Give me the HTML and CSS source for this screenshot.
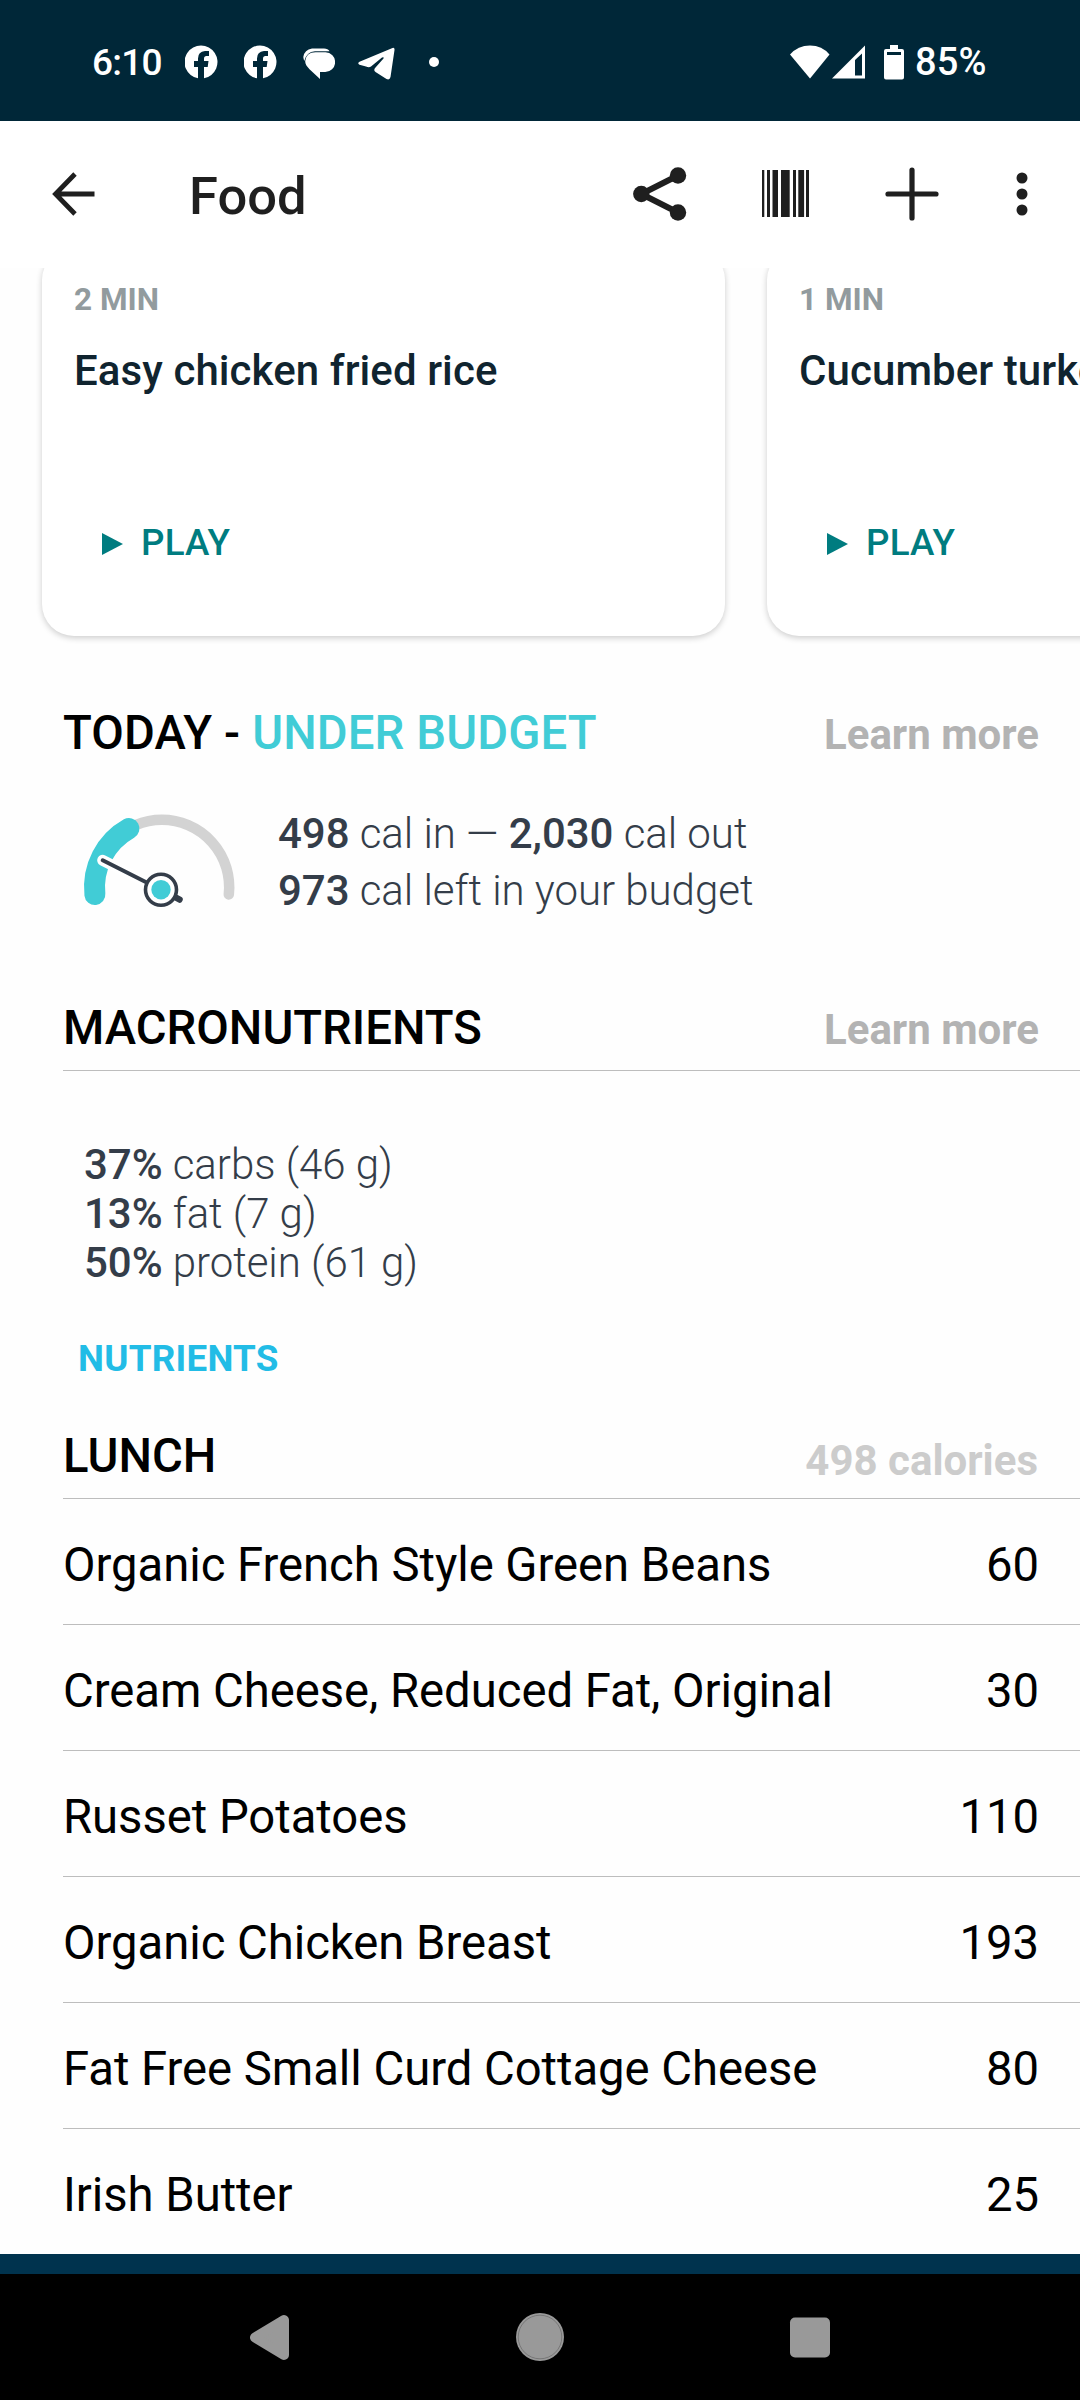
FILE: index.html
```html
<!DOCTYPE html>
<html lang="en">
<head>
    <meta charset="UTF-8">
    <title>Food</title>
    <link rel="stylesheet" href="styles.css">
</head>
<body>
    <!-- Status Bar -->
    <div class="status-bar">
        <div class="status-left">
            <span class="time">6:10</span>
            <svg class="fb-icon" width="34" height="34" viewBox="0 0 34 34"><path fill="#fff" d="M13 33.300V22H9v-6h4v-2.500q0-7 7-7.500h4v5h-2.500Q19 11 19 13.800V16h4.500l-.800 6H19v11.300A16.500 16.500 0 1 0 13 33.300z"/></svg>
            <svg class="fb-icon" width="34" height="34" viewBox="0 0 34 34"><path fill="#fff" d="M13 33.300V22H9v-6h4v-2.500q0-7 7-7.500h4v5h-2.500Q19 11 19 13.800V16h4.500l-.800 6H19v11.300A16.500 16.500 0 1 0 13 33.300z"/></svg>
            <svg class="chat-icon" width="32" height="32" viewBox="0 0 32 32"><path fill="#fff" d="M9 .500h12q4 0 5.500 2.800L12 3.300Q3.500 4 1.300 13 .500 11 .300 9 1.500 1.500 9 .500z"/><path fill="#fff" d="M12.500 4.300h10A9.700 9.700 0 0 1 22 24h-5v7L6.500 21.200Q2 17 2.200 13 3 4.500 12.500 4.300z"/></svg>
            <svg class="telegram-icon" width="38" height="34" viewBox="0 0 38 34"><path fill="#fff" d="M34.500 1Q36.800 .300 36.500 3l-4 27q-.800 3.500-4 2l-11-7q-2.500-2 0-4.500l8-9q.700-2-1.500-1L13 19.500Q11 20.800 8 19.500l-6.500-1.800q-2.500-1.500 0-3z"/></svg>
            <span class="more-dot"></span>
        </div>
        <div class="status-right">
            <svg width="40" height="34" viewBox="0 0 40 34"><path fill="#fff" d="M0 9.500Q8 .500 20 .500t19.500 9L20 33.500z"/></svg>
            <svg class="signal-icon" width="34" height="34" viewBox="0 0 34 34"><path fill="#fff" fill-rule="evenodd" d="M0 33.500 33 .500v33zM23 15v15.500h7V8.500z"/></svg>
            <svg class="battery-icon" width="20" height="35" viewBox="0 0 20 35"><path fill="#fff" fill-rule="evenodd" d="M6 0h8v4h4q2 0 2 2v26.500q0 2-2 2H2q-2 0-2-2V6q0-2 2-2h4zM3 7v3h14V7z"/></svg>
            <span class="percent">85%</span>
        </div>
    </div>

    <!-- Toolbar -->
    <div class="toolbar">
        <svg class="back-icon" width="44" height="44" viewBox="0 0 44 44"><path fill="none" stroke="#1f1f1f" stroke-width="4.800" d="M42.500 22H4M23 2 3.500 22 23 42"/></svg>
        <div class="title">Food</div>
        <svg class="share-icon" width="54" height="54" viewBox="0 0 54 54"><path fill="none" stroke="#1f1f1f" stroke-width="6" d="M45 8.500 8.300 27 45 45.500"/><g fill="#1f1f1f"><circle cx="45" cy="8.500" r="8.200"/><circle cx="8.300" cy="27" r="8.200"/><circle cx="45" cy="45.500" r="8.200"/></g></svg>
        <svg class="barcode-icon" width="47" height="47" viewBox="0 0 47 47"><path fill="#1f1f1f" d="M0 0h2.300v47H0zM5 0h3v47H5zM10.500 0H16v47h-5.500zM19 0h8.700v47H19zM31 0h3v47h-3zM36.300 0h5.800v47h-5.800zM44 0h3v47h-3z"/></svg>
        <svg class="plus-icon" width="54" height="54" viewBox="0 0 54 54"><path stroke="#1f1f1f" stroke-width="5.200" stroke-linecap="round" d="M27 3v48M3 27h48"/></svg>
        <svg class="menu-icon" width="12" height="44" viewBox="0 0 12 44"><g fill="#1f1f1f"><circle cx="6" cy="6" r="5.500"/><circle cx="6" cy="22" r="5.500"/><circle cx="6" cy="38" r="5.500"/></g></svg>
    </div>

    <!-- Main Content Area -->
    <div class="main-content">
        <div class="cards">
            <div class="card">
                <div class="duration">2 MIN</div>
                <div class="card-title">Easy chicken fried rice</div>
                <div class="play"><span class="play-icon"></span>PLAY</div>
            </div>
            <div class="card">
                <div class="duration">1 MIN</div>
                <div class="card-title">Cucumber turkey</div>
                <div class="play"><span class="play-icon"></span>PLAY</div>
            </div>
        </div>

        <!-- Calorie budget -->
        <div class="section-header today-header">
            <div>TODAY - <span class="under">UNDER BUDGET</span></div>
            <div class="learn-more">Learn more</div>
        </div>
        <div class="budget">
            <svg class="gauge" width="160" height="114" viewBox="80 805 160 114" fill="none" stroke-linecap="round">
                <path stroke="#d3d3d3" stroke-width="10.500" d="M95 894.500A67.300 67.300 0 1 1 228.800 894.500"/>
                <path stroke="#41ccd6" stroke-width="21" d="M94.900 894.500A67.300 67.300 0 0 1 129 828.500"/>
                <path stroke="#fff" stroke-width="11" d="M102.700 860.300 161 889.700"/>
                <path stroke="#343d49" stroke-width="4" d="M102.700 860.300 161 889.700"/>
                <path stroke="#343d49" stroke-width="6.500" d="M172 895.500l7.500 4"/>
                <circle cx="161" cy="889.700" r="15.500" fill="#fff" stroke="#343d49" stroke-width="3.600"/>
                <circle cx="161" cy="889.700" r="9.700" fill="#41ccd6"/>
            </svg>
            <div class="budget-text">
                <div><b>498</b> cal in — <b>2,030</b> cal out</div>
                <div><b>973</b> cal left in your budget</div>
            </div>
        </div>

        <!-- Macronutrients -->
        <div class="section-header lined macro-header">
            <div>MACRONUTRIENTS</div>
            <div class="learn-more">Learn more</div>
        </div>
        <div class="macros">
            <div><b>37%</b> carbs (46 g)</div>
            <div><b>13%</b> fat (7 g)</div>
            <div><b>50%</b> protein (61 g)</div>
        </div>
        <div class="nutrients">NUTRIENTS</div>

        <!-- Lunch -->
        <div class="section-header lined lunch-header">
            <div>LUNCH</div>
            <div class="meal-total">498 calories</div>
        </div>
        <div class="food-list">
            <div class="food"><span>Organic French Style Green Beans</span><span>60</span></div>
            <div class="food"><span>Cream Cheese, Reduced Fat, Original</span><span>30</span></div>
            <div class="food"><span>Russet Potatoes</span><span>110</span></div>
            <div class="food"><span>Organic Chicken Breast</span><span>193</span></div>
            <div class="food"><span>Fat Free Small Curd Cottage Cheese</span><span>80</span></div>
            <div class="food"><span>Irish Butter</span><span>25</span></div>
        </div>
    </div>

    <div class="bottom-strip"></div>

    <!-- Android Navigation -->
    <div class="nav-bar">
        <svg width="48" height="48" viewBox="0 0 48 48"><path fill="#999" stroke="#999" stroke-width="10" stroke-linejoin="round" d="M38 7v35L9 24.500z"/></svg>
        <svg width="48" height="48" viewBox="0 0 48 48"><circle cx="24" cy="24" r="24" fill="#999"/><circle cx="24" cy="24" r="21.800" fill="none" stroke="#6f6f6f" stroke-width=".8"/></svg>
        <svg width="48" height="48" viewBox="0 0 48 48"><rect x="4" y="4.500" width="40" height="40" rx="5" fill="#999"/></svg>
    </div>
</body>
</html>
```

FILE: styles.css
```css
:root {
    --status-bg: #002738;
    --strip-bg: #00334e;
    --page-bg: #fefefe;
    --icon-color: #1f1f1f;
    --line-color: #bdbdbd;
    --slate: #343d49;
    --teal: #007c80;
    --aqua: #41ccd6;
}
body {
    font-family: Roboto, sans-serif;
    margin: 0;
    width: 1080px;
    height: 2400px;
    background-color: var(--page-bg);
    color: #000;
    display: flex;
    flex-direction: column;
    overflow: hidden;
}
svg {
    display: block;
    flex-shrink: 0;
}
b {
    font-weight: 500;
}

/* --- Status Bar --- */
.status-bar {
    background-color: var(--status-bg);
    color: #fff;
    height: 121px;
    box-sizing: border-box;
    padding: 3px 92px 0 92px;
    display: flex;
    align-items: center;
    justify-content: space-between;
    font-size: 37px;
    font-weight: 500;
    flex-shrink: 0;
}
.status-left, .status-right {
    display: flex;
    align-items: center;
}
.time {
    width: 93px;
    letter-spacing: -0.8px;
}
.fb-icon {
    margin-right: 24.5px;
}
.chat-icon {
    margin: 3px 23px 0 1px;
}
.telegram-icon {
    margin-top: 3px;
}
.more-dot {
    width: 10px;
    height: 10px;
    border-radius: 50%;
    background-color: #fff;
    margin-left: 33px;
}
.signal-icon {
    margin-left: 2px;
}
.battery-icon {
    margin: 0 11px 0 18px;
}
.percent {
    width: 73px;
    font-size: 38px;
    letter-spacing: 0.2px;
}

/* --- Toolbar --- */
.toolbar {
    background-color: #fff;
    height: 147px;
    box-sizing: border-box;
    padding: 0 52px 2px 52px;
    display: flex;
    align-items: center;
    flex-shrink: 0;
}
.toolbar .title {
    font-size: 52.5px;
    font-weight: 500;
    color: var(--icon-color);
    margin: 4px 0 0 93px;
    flex-grow: 1;
}
.share-icon {
    margin-right: 75px;
}
.barcode-icon {
    margin-right: 76px;
}
.plus-icon {
    margin-right: 77px;
}

/* --- Main Content --- */
.main-content {
    height: 1986px;
    overflow: hidden;
    flex-shrink: 0;
}
.cards {
    display: flex;
    gap: 42px;
    padding: 0 0 20px 42px;
    margin-top: -20px;
}
.card {
    width: 683px;
    height: 388px;
    box-sizing: border-box;
    padding: 33px 33px 0 32px;
    flex-shrink: 0;
    background-color: #fff;
    border-radius: 32px;
    box-shadow: 0 2px 6px rgba(0,0,0,0.2);
}
.duration {
    font-size: 31.5px;
    line-height: 37px;
    font-weight: 700;
    color: #929b9e;
}
.card-title {
    font-size: 42px;
    line-height: 49px;
    font-weight: 500;
    letter-spacing: 0.08px;
    color: #10242f;
    margin-top: 28px;
    white-space: nowrap;
}
.play {
    display: flex;
    font-size: 36.75px;
    line-height: 43px;
    font-weight: 500;
    letter-spacing: 0.2px;
    color: var(--teal);
    margin: 126px 0 0 28px;
}
.play-icon {
    border-left: 21px solid var(--teal);
    border-top: 11px solid transparent;
    border-bottom: 11px solid transparent;
    height: 0;
    margin: 12px 18px 0 0;
}

/* --- Sections --- */
.section-header {
    display: flex;
    justify-content: space-between;
    align-items: baseline;
    margin-left: 63px;
    padding-right: 41px;
    font-size: 47.25px;
    line-height: 55px;
    font-weight: 500;
}
.lined {
    border-bottom: 1px solid var(--line-color);
}
.learn-more, .meal-total {
    font-size: 42px;
    font-weight: 700;
    color: #b3b3b3;
}
.meal-total {
    color: #ccc;
    padding: 4px 1px 0 0;
}
.under {
    color: var(--aqua);
}
.today-header {
    height: 55px;
    margin-top: 50px;
    letter-spacing: 0.12px;
}
.today-header .learn-more {
    letter-spacing: 0;
}
.budget {
    display: flex;
    gap: 38px;
    margin: 44px 0 0 80px;
    font-size: 42px;
    line-height: 57px;
    font-weight: 300;
    letter-spacing: -0.03px;
    color: var(--slate);
}
.macro-header {
    height: 69px;
    margin-top: 82px;
}
.macros {
    margin: 69px 0 0 84px;
    font-size: 42px;
    line-height: 49px;
    font-weight: 300;
    letter-spacing: -0.04px;
    color: var(--slate);
}
.nutrients {
    margin: 50px 0 0 78px;
    font-size: 36.75px;
    line-height: 43px;
    font-weight: 700;
    letter-spacing: 0.25px;
    color: #22bce6;
}
.lunch-header {
    align-items: flex-start;
    height: 69px;
    padding-top: 1px;
    margin-top: 48px;
}

/* --- Food List --- */
.food-list {
    margin-left: 63px;
}
.food {
    display: flex;
    justify-content: space-between;
    align-items: center;
    height: 126px;
    box-sizing: border-box;
    padding: 6px 41px 0 0;
    border-bottom: 1px solid var(--line-color);
    font-size: 47.25px;
    letter-spacing: -0.04px;
}
.food:last-child {
    border-bottom: none;
}

/* --- Bottom --- */
.bottom-strip {
    height: 20px;
    background-color: var(--strip-bg);
    flex-shrink: 0;
}
.nav-bar {
    flex-grow: 1;
    background-color: #000;
    display: flex;
    justify-content: center;
    align-items: center;
    gap: 222px;
}
```
